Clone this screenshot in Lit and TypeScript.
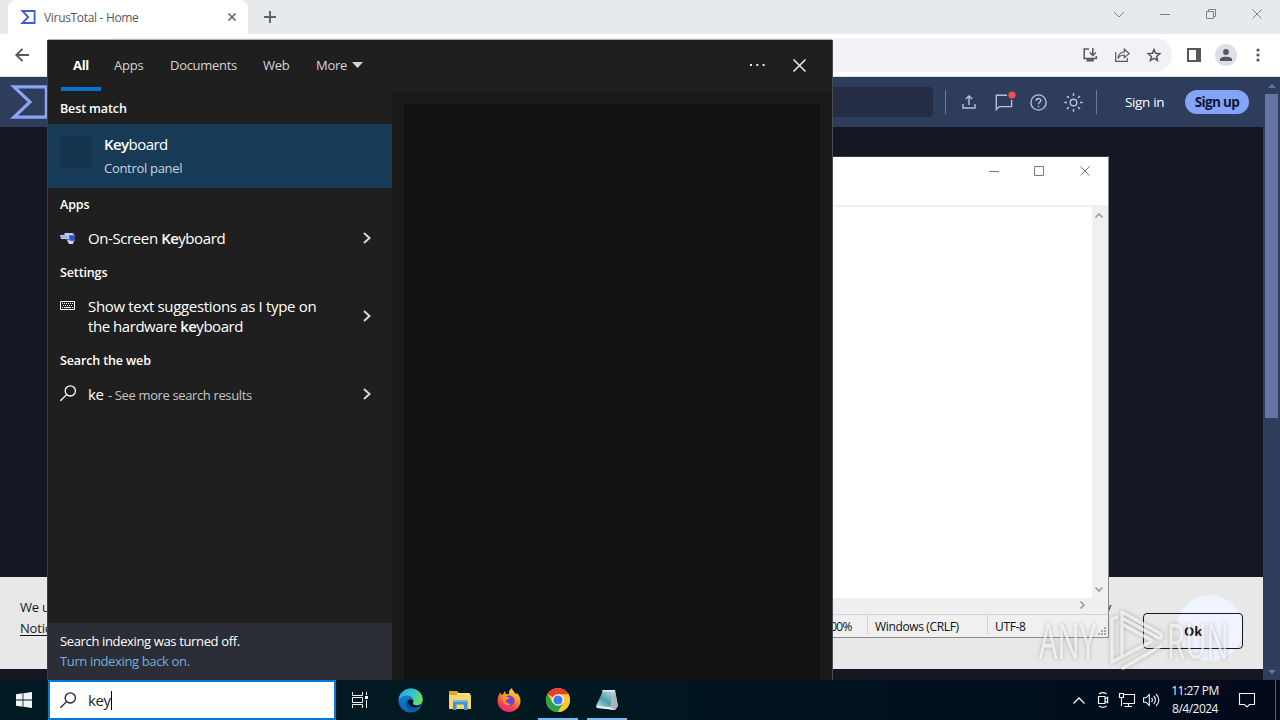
import { LitElement, html, css, svg } from "lit";
import { customElement } from "lit/decorators.js";

const icon = (w: number, h: number, body: unknown) =>
  html`<svg width=${w} height=${h} viewBox="0 0 ${w} ${h}" fill="none" stroke="currentColor">${body}</svg>`;

const base = css`
  * { box-sizing: border-box; }
  svg { display: block; flex: none; overflow: visible; }
  .cell { display: flex; align-items: center; justify-content: center; flex: none; }
`;

const closeX = (n: number, w = 1) =>
  icon(n, n, svg`<path stroke-width=${w} d="M0.5 0.5L${n - 0.5} ${n - 0.5}M${n - 0.5} 0.5L0.5 ${n - 0.5}"/>`);

const magnifier = icon(16, 17, svg`<circle cx="10.3" cy="5.9" r="5.1" stroke-width="1.3"/><path stroke-width="1.3" d="M6.6 9.6L0.4 15.8"/>`);

@customElement("browser-window")
class BrowserWindow extends LitElement {
  static styles = [base, css`
    :host { display: flex; flex-direction: column; height: 680px; font-family: "Open Sans", sans-serif; }
    .strip { height: 34px; background: #e7eaed; display: flex; padding-left: 8px; color: #5f6368; flex: none; }
    .tab { width: 240px; background: #fff; border-radius: 8px 8px 0 0; display: flex; align-items: center; padding: 0 12px; }
    .title { font-size: 12px; letter-spacing: -0.32px; color: #55595d; margin-left: 8px; flex: 1; white-space: nowrap; }
    .plus { width: 44px; }
    .controls { margin-left: auto; display: flex; height: 28px; color: #808285; }
    .controls .cell { width: 46px; }
    .toolbar { height: 43px; background: #fff; border-bottom: 1px solid #dfe1e5; display: flex; align-items: center; padding: 0 6px; color: #55585c; flex: none; }
    .toolbar .cell { width: 32px; height: 32px; }
    .omni { flex: 1; height: 34px; margin: 0 6px 0 60px; border-radius: 17px; background: #f1f2f5; display: flex; align-items: center; justify-content: flex-end; padding-right: 2px; }
    .toolbar .avatar { width: 22px; height: 22px; border-radius: 50%; background: #dcdfe6; }
    .view { flex: 1; display: flex; min-height: 0; background: #151722; }
    .page { flex: 1; display: flex; flex-direction: column; }
    .head { height: 50px; background: #2f3d5c; display: flex; align-items: center; padding: 0 14px 0 10px; color: #b3c2e4; flex: none; }
    .search { flex: 1; height: 30px; margin-left: 60px; border-radius: 4px; background: #252d45; }
    .rule { width: 1px; height: 24px; background: #6b7a9b; }
    .first { margin: 0 5px 0 12px; }
    .second { margin-left: 5px; }
    .head .cell { width: 35px; }
    .signin { margin-left: 28px; width: 60px; font-size: 13.5px; letter-spacing: -0.35px; color: #fff; }
    .signup { width: 64px; height: 24px; border-radius: 12px; background: #84a3fb; color: #0d1733; font-size: 13.5px; font-weight: 700; letter-spacing: -0.65px; display: flex; align-items: center; justify-content: center; }
    .body { flex: 1; }
    .cookie { height: 92px; margin-bottom: 11px; background: #e8e8e8; display: flex; align-items: center; padding: 0 20px; color: #16181f; font-size: 13px; line-height: 21px; letter-spacing: -0.2px; flex: none; isolation: isolate; }
    .terms { flex: 1; margin-top: -10px; white-space: nowrap; }
    .line { display: flex; width: 1091px; justify-content: space-between; }
    .terms u { text-underline-offset: 2px; }
    .ok { width: 100px; height: 36px; margin-top: 16px; border: 1px solid #16181f; border-radius: 4px; display: flex; align-items: center; justify-content: center; font-weight: 700; position: relative; }
    .ripple { position: absolute; left: 33px; top: -19px; width: 66px; height: 66px; border-radius: 50%; background: #f0f4fe; z-index: -1; }
    .scroll { width: 17px; background: #2f3d5c; display: flex; flex-direction: column; align-items: center; justify-content: space-between; color: #6576a3; }
    .thumb { width: 13px; height: 324px; background: #6474a6; margin-bottom: auto; }
    .scroll .cell { height: 17px; }
  `];

  render() {
    return html`
      <div class="strip">
        <div class="tab">
          ${icon(16, 14, svg`<path stroke="#3c5bd8" stroke-width="1.8" d="M2.4 1H14.6V13H2.4L8.2 7Z"/>`)}
          <span class="title">VirusTotal - Home</span>
          ${closeX(8, 1.6)}
        </div>
        <div class="cell plus">${icon(12, 12, svg`<path stroke-width="1.9" d="M6 0V12M0 6H12"/>`)}</div>
        <div class="controls">
          <div class="cell">${icon(12, 7, svg`<path d="M1 1L6 6L11 1"/>`)}</div>
          <div class="cell">${icon(10, 1, svg`<path d="M0 .5H10"/>`)}</div>
          <div class="cell">${icon(10, 10, svg`<path d="M.5 2.5H7.5V9.5H.5ZM2.5 2.5V.5H9.5V7.5H7.5"/>`)}</div>
          <div class="cell">${closeX(10)}</div>
        </div>
      </div>
      <div class="toolbar">
        <div class="cell">${icon(14, 14, svg`<path stroke-width="1.9" d="M14 7H1.5M7.5 .8L1.3 7L7.5 13.2"/>`)}</div>
        <div class="omni">
          <div class="cell">${icon(15, 14, svg`<path stroke-width="1.5" d="M6 1H1.2V10.5H13.3V8M9.8 0V7M6.8 4.5L9.8 7.5L12.8 4.5"/><path stroke-width="2.4" d="M3.5 12.3H10.8"/>`)}</div>
          <div class="cell">${icon(15, 14, svg`<path stroke-width="1.2" d="M.7 4V13.3H12.3V10M3 10.5C3.3 6.5 5.8 4.2 9.3 4V1.2L14.2 5.6L9.3 9.8V7C6.5 7 4.5 8 3 10.5Z"/>`)}</div>
          <div class="cell">${icon(14, 14, svg`<path stroke-width="1.5" d="M7 1.6L8.6 5.3L12.8 5.7L9.6 8.4L10.6 12.4L7 10.3L3.4 12.4L4.4 8.4L1.2 5.7L5.4 5.3Z"/>`)}</div>
        </div>
        <div class="cell">${icon(14, 14, svg`<path stroke-width="2" d="M1 1H13V13H1Z"/><path fill="currentColor" stroke="none" d="M9 1H13V13H9Z"/>`)}</div>
        <div class="cell"><div class="cell avatar">${icon(12, 12, svg`<g fill="currentColor" stroke="none"><circle cx="6" cy="3" r="2.9"/><path d="M0 12V10.2C0 6.8 12 6.8 12 10.2V12Z"/></g>`)}</div></div>
        <div class="cell">${icon(4, 14, svg`<g fill="currentColor" stroke="none"><circle cx="2" cy="2" r="1.6"/><circle cx="2" cy="7" r="1.6"/><circle cx="2" cy="12" r="1.6"/></g>`)}</div>
      </div>
      <div class="view">
        <div class="page">
          <div class="head">
            ${icon(39, 34, svg`<path stroke="#8ba5f3" stroke-width="3.2" d="M4 1.8H36.4V32.2H4L20 17Z"/>`)}
            <div class="search"></div>
            <div class="rule first"></div>
            <div class="cell">${icon(14, 14, svg`<path stroke-width="1.4" d="M1 9V13H13V9M7 10V1M3.8 4L7 .9L10.2 4"/>`)}</div>
            <div class="cell">${icon(18, 18, svg`<path stroke-width="1.4" d="M12 2.2H1.3V16.6L4.3 13.6H16.6V7"/><circle cx="17" cy="2" r="3.6" fill="#fb4b4f" stroke="none"/>`)}</div>
            <div class="cell">${icon(17, 17, svg`<circle cx="8.5" cy="8.5" r="7.6" stroke-width="1.4"/><path stroke-width="1.4" d="M6.2 6.8C6.2 3.6 10.8 3.8 10.8 6.5C10.8 8.3 8.5 8.3 8.5 10.3M8.5 11.7V13.2"/>`)}</div>
            <div class="cell">${icon(19, 19, svg`<circle cx="9.5" cy="9.5" r="3.3" stroke-width="1.4"/><path stroke-width="1.5" d="M9.5 .3V3M9.5 16V18.7M.3 9.5H3M16 9.5H18.7M3 3L4.9 4.9M14.1 14.1L16 16M3 16L4.9 14.1M14.1 4.9L16 3"/>`)}</div>
            <div class="rule second"></div>
            <span class="signin">Sign in</span>
            <div class="signup">Sign up</div>
          </div>
          <div class="body"></div>
          <div class="cookie">
            <div class="terms">
              <div class="line"><span>We use cookies</span><span>y</span></div>
              <u>Notice</u>
            </div>
            <div class="ok"><div class="ripple"></div>Ok</div>
          </div>
        </div>
        <div class="scroll">
          <div class="cell">${icon(8, 4, svg`<path fill="currentColor" stroke="none" d="M0 4L4 0L8 4Z"/>`)}</div>
          <div class="thumb"></div>
          <div class="cell">${icon(8, 4, svg`<path fill="currentColor" stroke="none" d="M0 0L4 4L8 0Z"/>`)}</div>
        </div>
      </div>`;
  }
}

@customElement("notepad-window")
class NotepadWindow extends LitElement {
  static styles = [base, css`
    :host { display: flex; flex-direction: column; background: #fff; border: 1px solid #8b8b92; border-top-color: #3a3c46; font-family: "Open Sans", sans-serif; }
    .title { height: 28px; display: flex; justify-content: flex-end; color: #77797b; padding-right: 0.5px; flex: none; }
    .title .cell { width: 45.5px; }
    .menu { height: 20px; flex: none; }
    .edit { flex: 1; display: flex; border-top: 2px solid #f0f0f0; min-height: 0; color: #9b9b9b; }
    .text { flex: 1; background: #fff; }
    .vbar { width: 16px; background: #f0f0f0; display: flex; flex-direction: column; justify-content: space-between; padding-right: 2px; }
    .vbar .cell { height: 17px; }
    .hbar { height: 16px; background: #efefef; display: flex; align-items: center; justify-content: flex-end; padding: 0 23px 2px 0; color: #9b9b9b; flex: none; }
    .status { height: 23px; background: #f0f0f0; border-top: 1px solid #d6d6d6; display: flex; justify-content: flex-end; font-size: 12px; letter-spacing: -0.35px; color: #111; flex: none; }
    .status div { border-left: 1px solid #d4d4d4; padding: 2px 0 0 7px; line-height: 19px; margin-bottom: 2px; }
    .status .zoom { width: 50px; padding-left: 6px; letter-spacing: -0.7px; }
    .crlf { width: 120px; }
    .enc { width: 101px; }
    .status .grip { border: 0; padding: 0; margin: 0; width: 20px; display: flex; align-items: flex-end; justify-content: flex-end; color: #a5a5a5; padding: 0 2px 2px 0; }
  `];

  render() {
    return html`
      <div class="title">
        <div class="cell">${icon(10, 1, svg`<path d="M0 .5H10"/>`)}</div>
        <div class="cell">${icon(10, 10, svg`<path d="M.5 .5H9.5V9.5H.5Z"/>`)}</div>
        <div class="cell">${closeX(10)}</div>
      </div>
      <div class="menu"></div>
      <div class="edit">
        <div class="text"></div>
        <div class="vbar">
          <div class="cell">${icon(8, 5, svg`<path stroke-width="1.6" d="M.5 4.5L4 1L7.5 4.5"/>`)}</div>
          <div class="cell">${icon(8, 5, svg`<path stroke-width="1.6" d="M.5 .5L4 4L7.5 .5"/>`)}</div>
        </div>
      </div>
      <div class="hbar">${icon(5, 8, svg`<path stroke-width="1.6" d="M.5 .5L4 4L.5 7.5"/>`)}</div>
      <div class="status">
        <div class="zoom">100%</div>
        <div class="crlf">Windows (CRLF)</div>
        <div class="enc">UTF-8</div>
        <div class="grip">${icon(8, 8, svg`<path stroke-width="2" stroke-dasharray="2 1" d="M6 1H8M3 4H8M0 7H8"/>`)}</div>
      </div>`;
  }
}

@customElement("search-flyout")
class SearchFlyout extends LitElement {
  static styles = [base, css`
    :host { display: flex; flex-direction: column; background: #1f1f1f; box-shadow: 0 -1px 0 #aeb0b2, 1px 0 0 #4a4c55, -1px 0 0 #3a3d4c; color: #fff; font-family: "Open Sans", sans-serif; }
    .tabs { height: 52px; flex: none; display: flex; padding-left: 13px; font-size: 13px; color: #d4d4d4; }
    .tab { height: 51px; padding: 2px 12px 0; display: flex; align-items: center; margin-right: 1px; border-bottom: 4px solid transparent; white-space: nowrap; }
    .all { width: 40px; font-weight: 700; color: #fff; border-color: #0a74cd; letter-spacing: -0.3px; }
    .apps { width: 55px; letter-spacing: -0.2px; }
    .docs { width: 92px; letter-spacing: -0.3px; }
    .web { width: 52px; letter-spacing: -0.3px; }
    .more { gap: 5px; letter-spacing: -0.25px; }
    .right { margin-left: auto; display: flex; padding-right: 11.5px; }
    .right .cell { width: 42px; height: 50px; color: #e6e6e6; }
    .cols { flex: 1; display: flex; min-height: 0; }
    .list { width: 344px; display: flex; flex-direction: column; }
    .detail { flex: 1; background: #191919; padding: 12px 12px 0; display: flex; }
    .preview { flex: 1; background: #121212; }
    .label { height: 32px; padding-left: 12px; font-size: 12.5px; font-weight: 600; line-height: 33px; letter-spacing: -0.13px; flex: none; }
    .hero { height: 64px; background: #173a56; display: flex; padding: 12px; flex: none; }
    .blank { width: 32px; height: 32px; background: #14344f; margin-right: 12px; }
    .name { font-size: 15px; line-height: 20px; letter-spacing: -0.5px; margin-top: -2px; }
    .sub { font-size: 13px; line-height: 20px; letter-spacing: -0.3px; color: #c9d3dc; margin-top: 4px; }
    b { font-weight: 600; letter-spacing: -0.6px; }
    .row { height: 36px; display: flex; padding: 8px 21.5px 0 12px; font-size: 15px; line-height: 20px; letter-spacing: -0.4px; flex: none; }
    .two { height: 56px; letter-spacing: -0.33px; }
    .glyph { width: 28px; height: 19px; display: flex; align-items: center; }
    .grow { flex: 1; white-space: nowrap; }
    .second { letter-spacing: -0.45px; }
    .go { height: calc(100% - 8px); display: flex; align-items: center; color: #d8d8d8; }
    .hint { font-size: 13px; letter-spacing: -0.37px; color: #c4c4c4; margin-left: 1px; }
    .notice { margin-top: auto; height: 57px; background: #2b2e37; padding: 8px 12px; font-size: 13px; line-height: 20px; letter-spacing: -0.36px; }
    .link { color: #76aeda; }
  `];

  private row(glyph: unknown, text: unknown, two = false) {
    return html`<div class="row ${two ? "two" : ""}">
      <div class="glyph">${glyph}</div>
      <div class="grow">${text}</div>
      <div class="go">${icon(8, 12, svg`<path stroke-width="2" d="M1 1L6.5 6L1 11"/>`)}</div>
    </div>`;
  }

  render() {
    const osk = icon(16, 14, svg`<g stroke="none"><path fill="#d3d8e4" d="M7 9L14 9L13 13H9Z"/><path fill="#5a78d6" d="M4 2H13L15 4V10L11 10L5 8Z"/><path fill="#3150b8" d="M9 5H15V9L11 9.5Z"/><path fill="#b9cbf5" d="M5 2H13V4H5ZM0 4H9V8H1Z"/><path fill="#7d98df" d="M1 5.5H8V6.5H1Z"/></g>`);
    const kbd = icon(15, 9, svg`<path d="M.5 .5H14.5V8.5H.5Z"/><path stroke-dasharray="1 1" d="M2 2.5H13M3 4.5H13"/><path d="M2 6.5H3M4 6.5H11M12 6.5H13"/>`);
    return html`
      <div class="tabs">
        <div class="tab all">All</div>
        <div class="tab apps">Apps</div>
        <div class="tab docs">Documents</div>
        <div class="tab web">Web</div>
        <div class="tab more">More ${icon(11, 6, svg`<path fill="currentColor" stroke="none" d="M0 0H11L5.5 6Z"/>`)}</div>
        <div class="right">
          <div class="cell">${icon(15, 2, svg`<path stroke-width="2" stroke-dasharray="2 4.3" d="M0 1H15"/>`)}</div>
          <div class="cell">${closeX(13, 1.6)}</div>
        </div>
      </div>
      <div class="cols">
        <div class="list">
          <div class="label">Best match</div>
          <div class="hero">
            <div class="blank"></div>
            <div><div class="name"><b>Key</b>board</div><div class="sub">Control panel</div></div>
          </div>
          <div class="label">Apps</div>
          ${this.row(osk, html`On-Screen <b>Ke</b>yboard`)}
          <div class="label">Settings</div>
          ${this.row(kbd, html`Show text suggestions as I type on<div class="second">the hardware <b>ke</b>yboard</div>`, true)}
          <div class="label">Search the web</div>
          ${this.row(magnifier, html`ke <span class="hint">- See more search results</span>`)}
          <div class="notice">Search indexing was turned off.<div class="link">Turn indexing back on.</div></div>
        </div>
        <div class="detail"><div class="preview"></div></div>
      </div>`;
  }
}

@customElement("task-bar")
class TaskBar extends LitElement {
  static styles = [base, css`
    :host { display: flex; height: 40px; background: linear-gradient(90deg, #011a23, #011820 45%, #02101f 75%, #020a1a); color: #f2f4f5; font-family: "Open Sans", sans-serif; }
    .start { width: 48px; }
    .box { width: 288px; border: 2px solid #0a77d5; background: #fff; color: #222; display: flex; align-items: center; padding-left: 10px; font-size: 15px; letter-spacing: -0.4px; }
    .typed { margin-left: 12px; padding-bottom: 1px; line-height: 18px; }
    .caret { width: 1px; height: 19px; background: #000; }
    .view { width: 48px; margin-right: 2px; }
    .app { width: 49px; }
    .app.open { background: linear-gradient(#76b9ed, #76b9ed) center bottom / 40px 2px no-repeat; }
    .tray { margin-left: auto; display: flex; }
    .tray .cell { width: 24px; }
    .clock { width: 64px; text-align: center; font-size: 12px; line-height: 18px; letter-spacing: -0.5px; padding-top: 2px; white-space: nowrap; }
    .tray .action { width: 40px; }
    .peek { width: 1px; background: #56616e; margin: 0 4px 0 8px; }
  `];

  render() {
    const edge = icon(25, 25, svg`<defs><linearGradient id="ea" x1="0" y1="0" x2="1" y2=".5"><stop offset="0" stop-color="#2a9fe0"/><stop offset=".55" stop-color="#31c6c9"/><stop offset="1" stop-color="#62dc62"/></linearGradient><linearGradient id="eb" x1="0" y1="0" x2="0" y2="1"><stop offset="0" stop-color="#1588d8"/><stop offset="1" stop-color="#0e62b4"/></linearGradient></defs>
      <g stroke="none"><circle cx="12.5" cy="12.5" r="12" fill="url(#eb)"/><path fill="url(#ea)" d="M.6 11.8C1.5 4.5 7 .5 12.8 .5C20 .5 24.7 5.8 24.7 11.3C24.7 15.5 21.5 17.4 18.5 17.4C15.7 17.4 14.5 16.4 14.8 15.5C16.8 13.5 15.5 8.2 10 7.5C5.5 7.2 2 9.2 .6 11.8Z"/><path fill="#0b4b91" d="M8.8 12.5C6 18.5 12 24.5 19.8 21.5C14.5 22 9.5 18.5 9.8 12.5C9.9 11.2 9.1 11.5 8.8 12.5Z"/><path fill="#011a22" d="M10 12.2C11.5 10.5 15.5 11.5 15.2 14.2C14.4 15.7 15.2 17 18 17.4C21 17.7 23 16.4 23.8 15.5C23 18 21.5 19 19 19.6C13.5 20.5 9.3 16.5 10 12.2Z"/></g>`);
    const folder = icon(22, 20, svg`<g stroke="none"><path fill="#e5a327" d="M0 1H8L10 3H21V6H0Z"/><path fill="#f9d56e" d="M0 5H22V19H0Z"/><path fill="#fbe08b" d="M8 3H21V5H8Z"/><path fill="#3f95d6" d="M4 10.5H18.5V20H15V14.5H7.5V20H4Z"/><path fill="#6bb9ee" d="M4 10.5H18.5V12H4Z"/></g>`);
    const firefox = icon(24, 24, svg`<defs><linearGradient id="fa" x1=".8" y1="0" x2=".3" y2="1"><stop offset="0" stop-color="#ffe040"/><stop offset=".4" stop-color="#ff9727"/><stop offset=".75" stop-color="#fb3d50"/><stop offset="1" stop-color="#e82589"/></linearGradient></defs>
      <g stroke="none"><path fill="url(#fa)" d="M3.2 4.2L4.4 7L6.5 5.5L7.7 3L9 6L12 6.2C11.5 3.2 13 1.2 15 0C15.2 2.7 17.2 3.4 19 6.2L20 5C22.8 8 23.5 10.7 23.5 13A11.5 11 0 0 1 .5 13C.5 9 2 7.4 3.2 4.2Z"/><circle cx="12.2" cy="12.8" r="5.4" fill="#7442cf"/><path fill="#ff9825" d="M5.5 9C8.5 8 11 9 13 10.5C11 11.3 9.5 11.2 8.7 12.8C9 15.5 12 16 14 15.5C12 19.5 4.5 17 5.5 9Z"/></g>`);
    const chrome = icon(24, 24, svg`<g stroke="none"><circle cx="12" cy="12" r="12" fill="#fdc92e"/><path fill="#e5402f" d="M12 12L1.6 6A12 12 0 0 1 22.4 6Z"/><path fill="#2ba24c" d="M1.6 6A12 12 0 0 0 12 24L17.2 15L12 12L6.8 15Z"/><path fill="#fdc92e" d="M12 6.2H22.5A12 12 0 0 1 12 24L17.2 15Z"/><circle cx="12" cy="12" r="5.8" fill="#fff"/><circle cx="12" cy="12" r="4.6" fill="#3b7ded"/></g>`);
    const notepad = icon(24, 22, svg`<defs><linearGradient id="na" x1="0" y1="1" x2=".7" y2="0"><stop offset="0" stop-color="#c5eaf0"/><stop offset=".5" stop-color="#4f9bab"/><stop offset="1" stop-color="#a3d5dd"/></linearGradient></defs>
      <g stroke="none"><path fill="#d9dee0" d="M8 2L20 1L23 17L20 21L2 18Z"/><path fill="url(#na)" d="M8 2L19 1.5L15.5 18.5L1 17Z"/><path fill="#a9b3b6" d="M19.5 1.5L23 17L20 21L15.5 18.5Z"/><path fill="#e9f1f2" d="M7.5 1H20V2.6H7Z"/><path fill="#f4f6f6" d="M1 17L15.5 18.5L20 21L2 19Z"/></g>`);
    const app = (g: unknown, open = false) => html`<div class="cell app ${open ? "open" : ""}">${g}</div>`;
    return html`
      <div class="cell start">${icon(16, 16, svg`<path fill="currentColor" stroke="none" d="M0 2.3L6.6 1.3V7.6H0ZM7.4 1.2L16 0V7.6H7.4ZM0 8.4H6.6V14.7L0 13.7ZM7.4 8.4H16V16L7.4 14.8Z"/>`)}</div>
      <div class="box">${magnifier}<span class="typed">key</span><span class="caret"></span></div>
      <div class="cell view">${icon(16, 16, svg`<path d="M.5 0V3.5H10.5V0M.5 16V12.5H10.5V16M.5 5.5H10.5V10.5H.5ZM14.5 0V3M14.5 8V16"/><path stroke-width="3" d="M13 5.5H16"/>`)}</div>
      ${app(edge)} ${app(folder)} ${app(firefox)} ${app(chrome, true)} ${app(notepad, true)}
      <div class="tray">
        <div class="cell">${icon(12, 7, svg`<path stroke-width="1.3" d="M.5 6.5L6 1L11.5 6.5"/>`)}</div>
        <div class="cell">${icon(12, 16, svg`<path stroke-width="1.2" d="M1.5 4.5H8V11.5H1.5ZM8 7L10.6 5.3V10.7L8 9M2 2C4.5 .2 7 .2 9.5 2M2 14C4.5 15.8 7 15.8 9.5 14"/>`)}</div>
        <div class="cell">${icon(16, 14, svg`<path stroke-width="1.1" d="M5 1.5H15.5V10.5H4M.5 .5H4.5V4.5H.5ZM2.5 4.5V13M9.5 10.5V13.5M5.5 13.5H13"/>`)}</div>
        <div class="cell">${icon(17, 14, svg`<path stroke-width="1.1" d="M.6 4.8H3L6.3 1.5V12.5L3 9.2H.6ZM8.5 5C9.7 6.2 9.7 7.8 8.5 9M10.7 3C13 5.3 13 8.7 10.7 11M13 1C16.8 4.5 16.8 9.5 13 13"/>`)}</div>
        <div class="clock">11:27 PM<br>8/4/2024</div>
        <div class="cell action">${icon(16, 15, svg`<path stroke-width="1.1" d="M.5 .5H15.5V11.5H10.5L8 14L5.5 11.5H.5Z"/>`)}</div>
        <div class="peek"></div>
      </div>`;
  }
}

@customElement("app-root")
class AppRoot extends LitElement {
  static styles = [base, css`
    :host { display: block; position: relative; width: 1280px; height: 720px; overflow: hidden; background: #151722; }
    .notepad { position: absolute; left: 400px; top: 156px; width: 709px; height: 482px; }
    .flyout { position: absolute; left: 48px; top: 40px; width: 784px; height: 640px; }
    .mark { position: absolute; left: 1039px; top: 607px; display: flex; align-items: center; height: 66px; color: rgba(255, 255, 255, 0.68); filter: drop-shadow(0 0 2px rgba(90, 90, 90, 0.6)); }
    .word { font: 400 49px/50px "Open Sans", sans-serif; width: 64px; white-space: nowrap; transform-origin: 0 50%; transform: scaleX(0.6); }
    .logo { margin-right: 2px; }
  `];

  render() {
    return html`
      <browser-window></browser-window>
      <notepad-window class="notepad"></notepad-window>
      <search-flyout class="flyout"></search-flyout>
      <task-bar></task-bar>
      <div class="mark">
        <span class="word">ANY</span>
        <div class="logo">${icon(62, 62, svg`<path stroke-width="3.2" stroke-linejoin="round" stroke-linecap="round" d="M14 8L9 10V53L49 32M19 3L58 25Q60 29 56 29L19 9ZM19 3V46M19 15L48 31M20 59L58 37"/>`)}</div>
        <span class="word">RUN</span>
      </div>`;
  }
}
